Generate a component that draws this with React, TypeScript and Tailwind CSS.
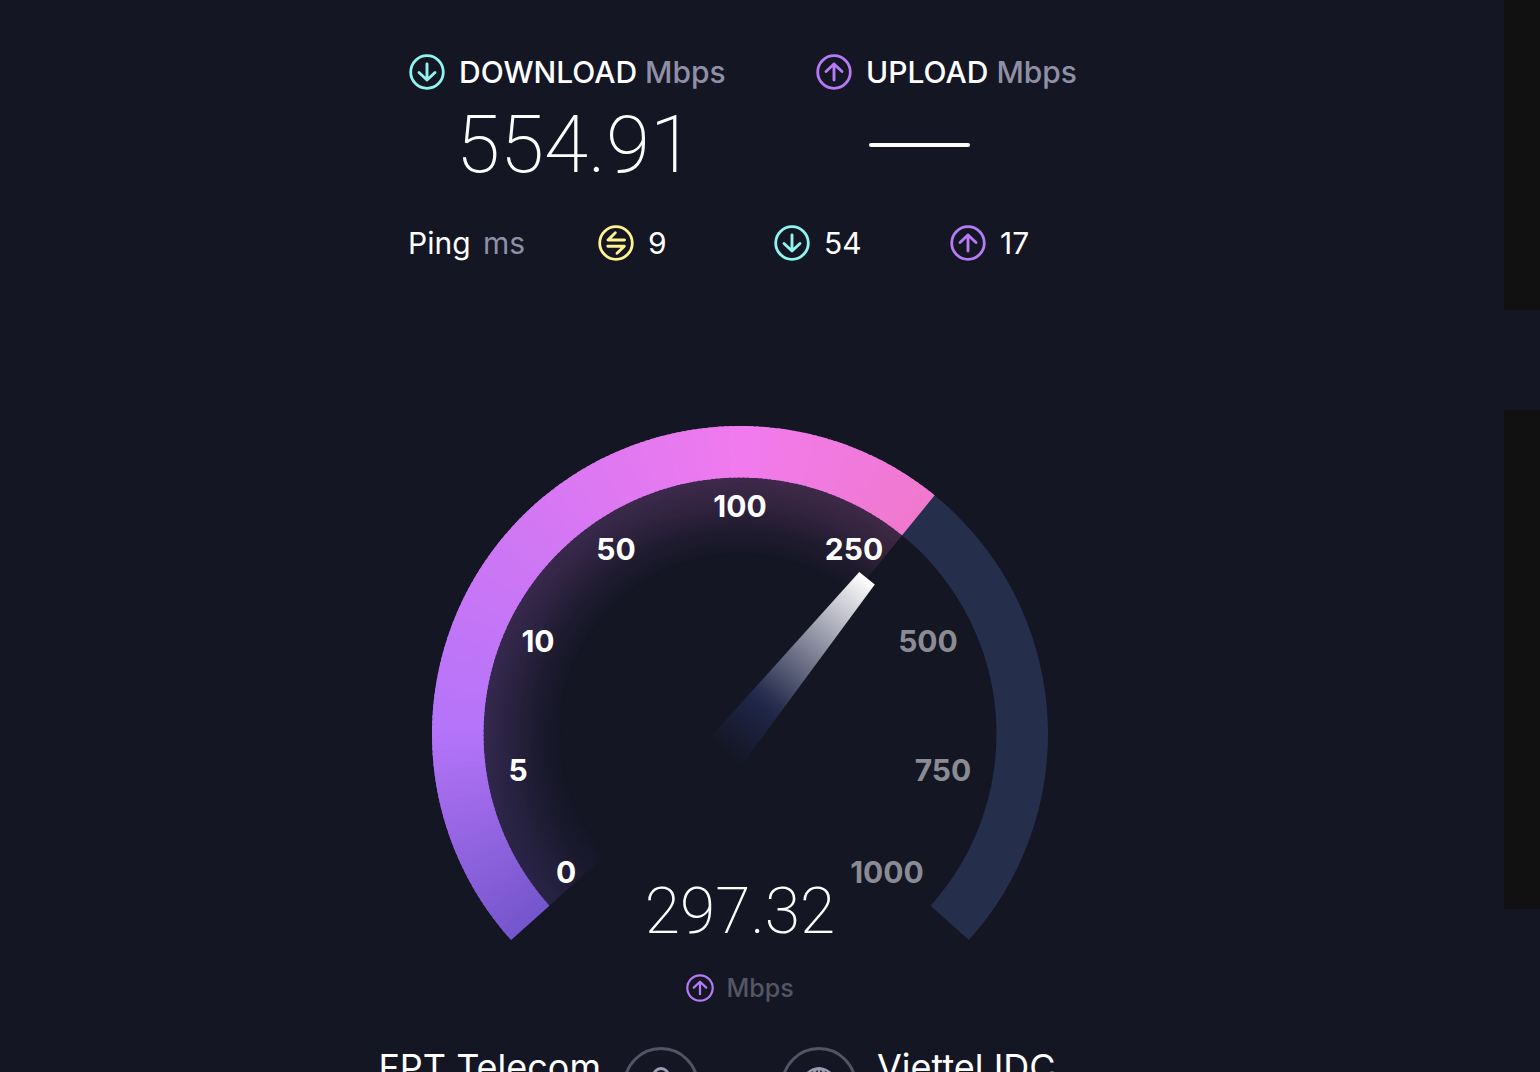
import React from 'react';

type IconKind = 'down' | 'up' | 'ping';

interface CircleIconProps {
  kind: IconKind;
  className?: string;
}

const iconPaths: Record<IconKind, string> = {
  down: 'M18 10v16M10 18.5l8 7.5l8-7.5',
  up: 'M18 26v-16M10 17.5l8-7.5l8 7.5',
  ping: 'M17.3 7.8L10 15H26.5M9.8 21.2H26.3L19 28.2',
};

const CircleIcon: React.FC<CircleIconProps> = ({ kind, className }) => (
  <svg viewBox="0 0 36 36" fill="none" stroke="currentColor" className={className} aria-hidden="true">
    <circle cx="18" cy="18" r="16.3" strokeWidth="2.8" />
    <path d={iconPaths[kind]} strokeWidth="2.9" strokeLinecap="round" strokeLinejoin="round" />
  </svg>
);

// Gauge geometry, angles are degrees clockwise from 12 o'clock
const CX = 308;
const CY = 308;
const OUTER = 308;
const INNER = 256.5;
const START = -132;
const END = 132;
const CURRENT = 39.2;

const point = (radius: number, angle: number) => {
  const rad = (angle * Math.PI) / 180;
  return `${(CX + radius * Math.sin(rad)).toFixed(2)} ${(CY - radius * Math.cos(rad)).toFixed(2)}`;
};

const ringPath = (from: number, to: number, outer: number, inner: number) => {
  const large = to - from > 180 ? 1 : 0;
  return `M${point(outer, from)}A${outer} ${outer} 0 ${large} 1 ${point(outer, to)}L${point(inner, to)}A${inner} ${inner} 0 ${large} 0 ${point(inner, from)}Z`;
};

const colorStops = [
  { angle: -132, rgb: [117, 86, 204] },
  { angle: -90, rgb: [180, 116, 249] },
  { angle: 0, rgb: [241, 122, 238] },
  { angle: 40, rgb: [240, 121, 205] },
];

const colorAt = (angle: number) => {
  const i = Math.max(1, colorStops.findIndex((stop) => stop.angle >= angle));
  const a = colorStops[i - 1];
  const b = colorStops[i];
  const t = (angle - a.angle) / (b.angle - a.angle);
  return `rgb(${a.rgb.map((c, n) => Math.round(c + (b.rgb[n] - c) * t)).join(',')})`;
};

const slices = Array.from({ length: Math.floor(CURRENT - START) }, (_, i) => START + i);

const marks = [
  { value: 0, x: 134, y: 446 },
  { value: 5, x: 86, y: 344 },
  { value: 10, x: 106, y: 215 },
  { value: 50, x: 184, y: 123 },
  { value: 100, x: 308, y: 80 },
  { value: 250, x: 422, y: 123 },
  { value: 500, x: 496, y: 215 },
  { value: 750, x: 511, y: 344 },
  { value: 1000, x: 455, y: 446 },
];

const Gauge: React.FC = () => (
  <svg viewBox="0 0 616 516" className="mx-auto block w-[616px]" role="img" aria-label="Speed gauge">
    <defs>
      <radialGradient id="glowFade" gradientUnits="userSpaceOnUse" cx={CX} cy={CY} r={INNER}>
        <stop offset="0.69" stopColor="#fff" stopOpacity="0" />
        <stop offset="0.8" stopColor="#fff" stopOpacity="0.06" />
        <stop offset="0.9" stopColor="#fff" stopOpacity="0.14" />
        <stop offset="1" stopColor="#fff" stopOpacity="0.2" />
      </radialGradient>
      <mask id="glowMask" maskUnits="userSpaceOnUse" x="0" y="0" width="616" height="516">
        <rect width="616" height="516" fill="url(#glowFade)" />
      </mask>
      <linearGradient id="needle" gradientUnits="userSpaceOnUse" x1="0" y1="107" x2="0" y2="332">
        <stop offset="0" stopColor="#fff" />
        <stop offset="0.08" stopColor="#e6e6ea" />
        <stop offset="0.68" stopColor="#2a3050" />
        <stop offset="0.74" stopColor="#20274a" stopOpacity="0.9" />
        <stop offset="1" stopColor="#20274a" stopOpacity="0" />
      </linearGradient>
    </defs>

    <path d={ringPath(START, END, OUTER, INNER)} fill="#252e4b" />
    <g mask="url(#glowMask)">
      {slices.map((angle) => (
        <path key={angle} d={ringPath(angle, Math.min(angle + 1.5, CURRENT), INNER, 150)} fill={colorAt(angle)} />
      ))}
    </g>
    {slices.map((angle) => (
      <path key={angle} d={ringPath(angle, Math.min(angle + 1.5, CURRENT), OUTER, INNER)} fill={colorAt(angle)} />
    ))}

    <path
      d="M298 107H318L329 332H287Z"
      fill="url(#needle)"
      transform={`rotate(${CURRENT} ${CX} ${CY})`}
    />

    {marks.map((mark) => (
      <text
        key={mark.value}
        x={mark.x}
        y={mark.y + 11}
        textAnchor="middle"
        className={mark.value > 297 ? 'fill-[#8b8b94] text-[30px] font-bold' : 'fill-white text-[30px] font-bold'}
      >
        {mark.value}
      </text>
    ))}
  </svg>
);

const pings: { kind: IconKind; value: number; color: string }[] = [
  { kind: 'ping', value: 9, color: 'size-9 text-[#fff38e]' },
  { kind: 'down', value: 54, color: 'size-9 text-[#8ff5ee]' },
  { kind: 'up', value: 17, color: 'size-9 text-[#b57bf5]' },
];

const App: React.FC = () => {
  return (
    <div className="flex h-screen overflow-hidden bg-[#141624] font-['Inter',sans-serif] text-white">
      <main className="min-w-0 flex-1 pt-[54px] pr-6">
        <section className="mx-auto w-[664px]">
          <div className="grid grid-cols-[407px_1fr]">
            <div>
              <h2 className="flex h-9 items-center gap-[14px] text-[30px] leading-9 font-medium whitespace-nowrap">
                <CircleIcon kind="down" className="ml-px size-9 shrink-0 text-[#8ff5ee]" />
                <span>
                  DOWNLOAD <span className="text-[#8f90a6]">Mbps</span>
                </span>
              </h2>
              <p className="flex h-[110px] items-center pl-12 font-['Roboto',sans-serif] text-[80px] leading-none font-extralight">
                554.91
              </p>
            </div>
            <div>
              <h2 className="flex h-9 items-center gap-[14px] text-[30px] leading-9 font-medium whitespace-nowrap">
                <CircleIcon kind="up" className="ml-px size-9 shrink-0 text-[#b57bf5]" />
                <span>
                  UPLOAD <span className="text-[#8f90a6]">Mbps</span>
                </span>
              </h2>
              <div className="flex h-[110px] items-center pl-[54px]">
                <div className="h-1 w-[101px] rounded-sm bg-white" />
              </div>
            </div>
          </div>

          <div className="mt-[25px] grid h-9 grid-cols-[190px_176px_176px_1fr] items-center text-[30px] leading-9">
            <span>
              Ping <span className="ml-1 text-[#8f90a6]">ms</span>
            </span>
            {pings.map((ping) => (
              <span key={ping.kind} className="flex items-center gap-[14px]">
                <CircleIcon kind={ping.kind} className={ping.color} />
                {ping.value}
              </span>
            ))}
          </div>
        </section>

        <section className="mt-[165px]">
          <Gauge />
          <p className="relative -mt-[70px] flex h-20 items-center justify-center font-['Roboto',sans-serif] text-[64px] leading-none font-extralight">
            297.32
          </p>
          <p className="mt-[22px] flex h-7 items-center justify-center gap-3 text-[25px] leading-7 font-medium text-[#555665]">
            <CircleIcon kind="up" className="size-7 text-[#b57bf5]" />
            Mbps
          </p>
        </section>

        {/* Provider on the left, test server on the right */}
        <section className="mt-[45px] grid grid-cols-2 gap-[82px] text-4xl">
          <div className="flex items-start justify-end gap-[22px]">
            <span>FPT Telecom</span>
            <svg viewBox="0 0 76 76" fill="none" className="size-[76px]" aria-hidden="true">
              <circle cx="38" cy="38" r="36.5" stroke="#525365" strokeWidth="3" />
              <circle cx="38" cy="29" r="7.5" stroke="#9a9bb0" strokeWidth="3" />
              <path d="M23 56c0-18 30-18 30 0z" stroke="#9a9bb0" strokeWidth="3" />
            </svg>
          </div>
          <div className="flex items-start gap-[20px]">
            <svg viewBox="0 0 76 76" fill="none" className="size-[76px]" aria-hidden="true">
              <circle cx="38" cy="38" r="36.5" stroke="#525365" strokeWidth="3" />
              <g stroke="#9a9bb0" strokeWidth="2.5">
                <circle cx="38" cy="38" r="16.5" />
                <ellipse cx="38" cy="38" rx="8" ry="16.5" />
                <path d="M38 21.5v33M21.5 38h33M24 29h28M24 47h28" />
              </g>
            </svg>
            <span>Viettel IDC</span>
          </div>
        </section>
      </main>

      <aside className="flex w-9 flex-col gap-[100px]">
        <div className="h-[310px] bg-[#111111]" />
        <div className="h-[499px] bg-[#111111]" />
      </aside>
    </div>
  );
};

export default App;
